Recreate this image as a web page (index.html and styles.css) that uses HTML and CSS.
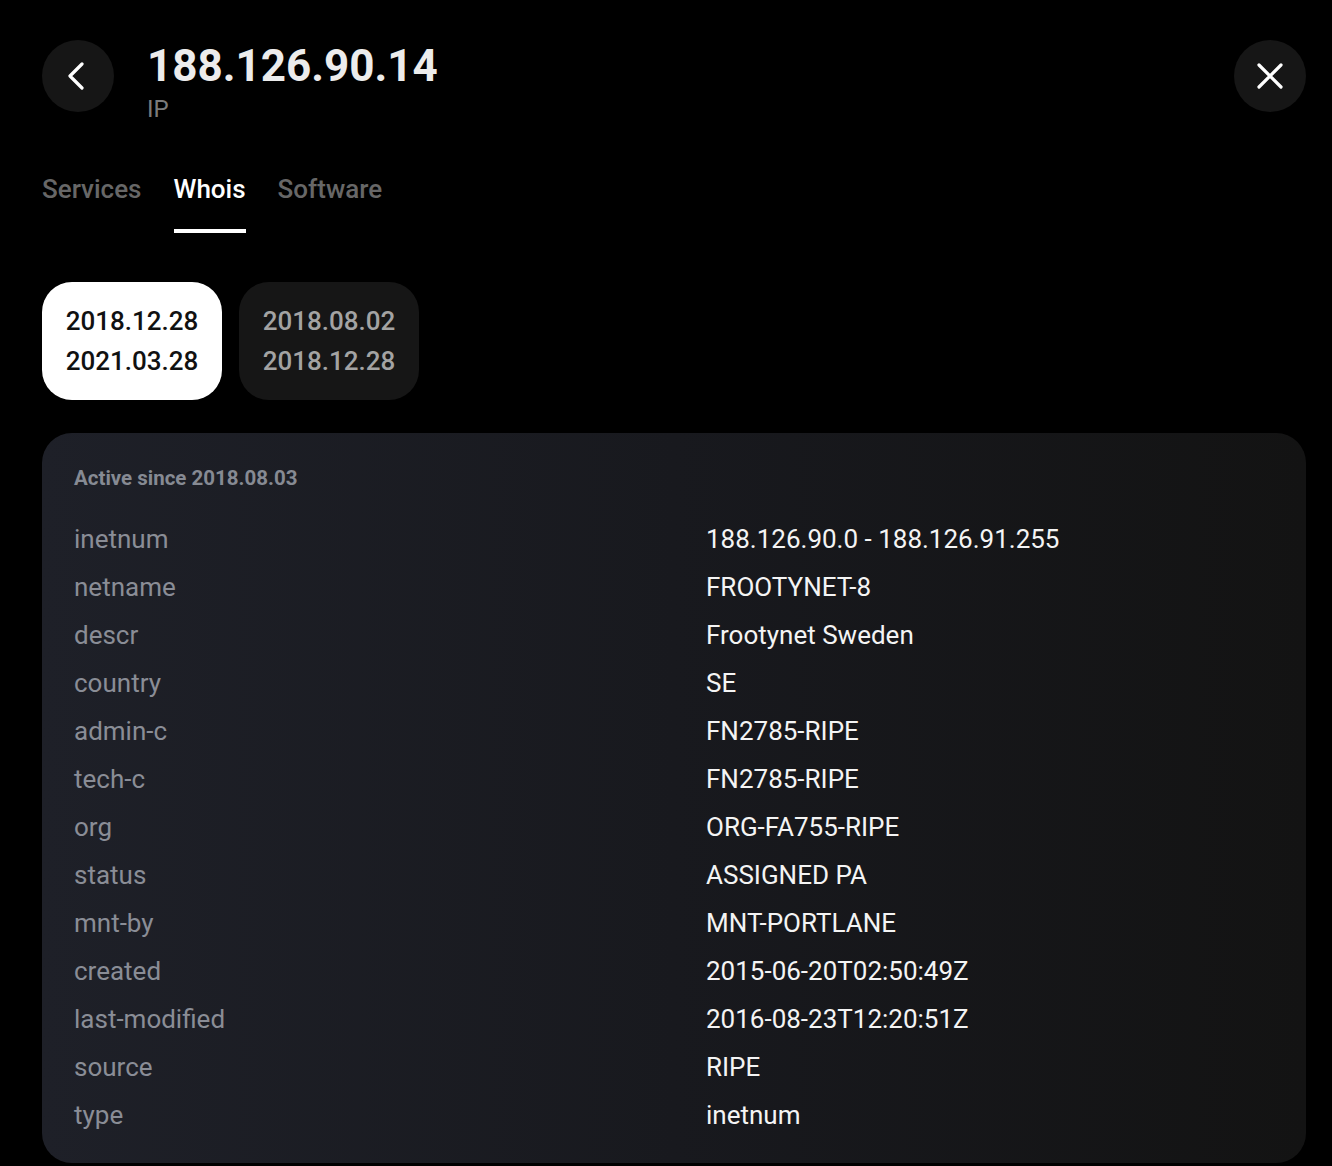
FILE: index.html
```html
<!DOCTYPE html>
<html lang="en">
<head>
<meta charset="utf-8">
<title>188.126.90.14 - Whois</title>
<link rel="stylesheet" href="styles.css">
</head>
<body>
<div class="page">
  <header class="header">
    <button class="round-btn back" aria-label="Back">
      <svg width="24" height="28" viewBox="0 0 24 28" fill="none"><path d="M17 2 L5 14 L17 26" stroke="#fff" stroke-width="3.2" stroke-linecap="round" stroke-linejoin="round"/></svg>
    </button>
    <div class="title-block">
      <h1 class="title">188.126.90.14</h1>
      <div class="subtitle">IP</div>
    </div>
    <button class="round-btn close" aria-label="Close">
      <svg width="28" height="28" viewBox="0 0 28 28" fill="none"><path d="M3 3 L25 25 M25 3 L3 25" stroke="#fff" stroke-width="3.2" stroke-linecap="round"/></svg>
    </button>
  </header>

  <nav class="tabs">
    <div class="tab">Services</div>
    <div class="tab active">Whois</div>
    <div class="tab">Software</div>
  </nav>

  <div class="periods">
    <div class="period selected"><span>2018.12.28</span><span>2021.03.28</span></div>
    <div class="period"><span>2018.08.02</span><span>2018.12.28</span></div>
  </div>

  <section class="card">
    <div class="card-head">Active since 2018.08.03</div>
    <dl class="rows">
      <dt>inetnum</dt><dd>188.126.90.0 - 188.126.91.255</dd>
      <dt>netname</dt><dd>FROOTYNET-8</dd>
      <dt>descr</dt><dd>Frootynet Sweden</dd>
      <dt>country</dt><dd>SE</dd>
      <dt>admin-c</dt><dd>FN2785-RIPE</dd>
      <dt>tech-c</dt><dd>FN2785-RIPE</dd>
      <dt>org</dt><dd>ORG-FA755-RIPE</dd>
      <dt>status</dt><dd>ASSIGNED PA</dd>
      <dt>mnt-by</dt><dd>MNT-PORTLANE</dd>
      <dt>created</dt><dd>2015-06-20T02:50:49Z</dd>
      <dt>last-modified</dt><dd>2016-08-23T12:20:51Z</dd>
      <dt>source</dt><dd>RIPE</dd>
      <dt>type</dt><dd>inetnum</dd>
    </dl>
  </section>
</div>
</body>
</html>
```

FILE: styles.css
```css
* { box-sizing: border-box; }
html, body {
  margin: 0;
  background: #000;
  font-family: Roboto, "Liberation Sans", Arial, sans-serif;
  color: #fff;
}
.page {
  padding: 40px 26px 0 42px;
}
.header {
  display: flex;
  align-items: flex-start;
}
.round-btn {
  width: 72px;
  height: 72px;
  border-radius: 50%;
  border: none;
  background: #161616;
  display: flex;
  align-items: center;
  justify-content: center;
  padding: 0;
  flex: none;
  cursor: pointer;
}
.back svg { margin-left: -2px; }
.title-block {
  margin-left: 33px;
  flex: 1;
}
.title {
  margin: 0;
  font-size: 44px;
  line-height: 52px;
  font-weight: 700;
  color: #ececec;
}
.subtitle {
  font-size: 24px;
  line-height: 28px;
  margin-top: 3px;
  color: #7b7b7b;
}
.tabs {
  display: flex;
  gap: 32px;
  margin-top: 50px;
}
.tab {
  font-size: 26px;
  line-height: 32px;
  font-weight: 500;
  color: #676767;
  padding-bottom: 24px;
  border-bottom: 4px solid transparent;
}
.tab.active {
  color: #fff;
  border-bottom-color: #fff;
}
.periods {
  display: flex;
  gap: 17px;
  margin-top: 49px;
}
.period {
  width: 180px;
  height: 118px;
  border-radius: 30px;
  background: #161616;
  color: #a3a3a3;
  display: flex;
  flex-direction: column;
  align-items: center;
  justify-content: center;
  font-size: 26px;
  line-height: 40px;
  font-weight: 500;
}
.period.selected {
  background: #fff;
  color: #111;
}
.card {
  margin-top: 33px;
  width: 1264px;
  border-radius: 30px;
  background: linear-gradient(to right, #1e2028 0%, #18191e 50%, #131313 100%);
  padding: 33px 32px 24px 32px;
}
.card-head {
  font-size: 20.5px;
  line-height: 24px;
  font-weight: 700;
  color: #868a93;
  margin-bottom: 25px;
}
.rows {
  margin: 0;
  display: grid;
  grid-template-columns: 1fr 1fr;
  column-gap: 64px;
}
.rows dt, .rows dd {
  margin: 0;
  font-size: 26px;
  line-height: 48px;
}
.rows dt { color: #8a8d96; }
.rows dd { color: #f4f4f4; }
```
